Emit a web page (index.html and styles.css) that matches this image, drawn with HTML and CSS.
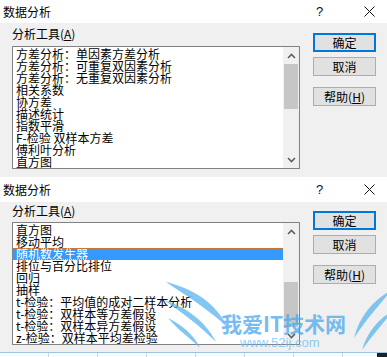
FILE: index.html
```html
<!DOCTYPE html>
<html lang="zh-CN">
<head>
  <meta charset="UTF-8">
  <title>数据分析</title>
  <link rel="stylesheet" href="styles.css">
</head>
<body>

  <div class="page">

    <!-- first dialog: list scrolled to top -->
    <div class="dialog dialog-top">
      <div class="titlebar">
        <span class="title">数据分析</span>
        <span class="tb-help">?</span>
        <span class="tb-close">
          <svg width="11" height="11" viewBox="0 0 11 11"><path d="M0.5 0.5 L10.5 10.5 M10.5 0.5 L0.5 10.5" stroke="#111" stroke-width="1"/></svg>
        </span>
      </div>
      <div class="body">
        <div class="main">
          <div class="label">分析工具(<u>A</u>)</div>
          <div class="listbox">
            <ul class="items">
              <li>方差分析：单因素方差分析</li>
              <li>方差分析：可重复双因素分析</li>
              <li>方差分析：无重复双因素分析</li>
              <li>相关系数</li>
              <li>协方差</li>
              <li>描述统计</li>
              <li>指数平滑</li>
              <li>F-检验 双样本方差</li>
              <li>傅利叶分析</li>
              <li>直方图</li>
            </ul>
            <div class="scrollbar">
              <div class="arrow">
                <svg width="9" height="6" viewBox="0 0 9 6"><path d="M1 5 L4.5 1.5 L8 5" fill="none" stroke="#606060" stroke-width="1.6"/></svg>
              </div>
              <div class="track">
                <div class="thumb"></div>
              </div>
              <div class="arrow">
                <svg width="9" height="6" viewBox="0 0 9 6"><path d="M1 1 L4.5 4.5 L8 1" fill="none" stroke="#606060" stroke-width="1.6"/></svg>
              </div>
            </div>
          </div>
        </div>
        <div class="buttons">
          <button class="btn btn-default">确定</button>
          <button class="btn">取消</button>
          <button class="btn btn-help">帮助(<u>H</u>)</button>
        </div>
      </div>
    </div>

    <!-- second dialog: list scrolled to bottom -->
    <div class="dialog dialog-bottom">
      <div class="titlebar">
        <span class="title">数据分析</span>
        <span class="tb-help">?</span>
        <span class="tb-close">
          <svg width="11" height="11" viewBox="0 0 11 11"><path d="M0.5 0.5 L10.5 10.5 M10.5 0.5 L0.5 10.5" stroke="#111" stroke-width="1"/></svg>
        </span>
      </div>
      <div class="body">
        <div class="main">
          <div class="label">分析工具(<u>A</u>)</div>
          <div class="listbox">
            <ul class="items">
              <li>直方图</li>
              <li>移动平均</li>
              <li class="selected">随机数发生器</li>
              <li>排位与百分比排位</li>
              <li>回归</li>
              <li>抽样</li>
              <li>t-检验：平均值的成对二样本分析</li>
              <li>t-检验：双样本等方差假设</li>
              <li>t-检验：双样本异方差假设</li>
              <li>z-检验：双样本平均差检验</li>
            </ul>
            <div class="scrollbar scrolled-end">
              <div class="arrow">
                <svg width="9" height="6" viewBox="0 0 9 6"><path d="M1 5 L4.5 1.5 L8 5" fill="none" stroke="#606060" stroke-width="1.6"/></svg>
              </div>
              <div class="track">
                <div class="thumb"></div>
              </div>
              <div class="arrow">
                <svg width="9" height="6" viewBox="0 0 9 6"><path d="M1 1 L4.5 4.5 L8 1" fill="none" stroke="#606060" stroke-width="1.6"/></svg>
              </div>
            </div>
          </div>
        </div>
        <div class="buttons">
          <button class="btn btn-default">确定</button>
          <button class="btn">取消</button>
          <button class="btn btn-help">帮助(<u>H</u>)</button>
        </div>
      </div>
    </div>

    <!-- strip of the sheet behind the dialog -->
    <div class="sheet-strip">
      <span></span><span></span><span></span><span></span><span></span><span></span><span></span><span class="dark"></span>
    </div>

    <!-- site watermark -->
    <div class="watermark">
      <svg class="wing wing-left" width="72" height="72" viewBox="0 0 72 72">
        <path d="M4 4 C22 8 52 20 66 50 C50 34 28 20 4 4 Z" fill="#5ab4ee"/>
        <path d="M2 22 C20 28 42 40 54 64 C38 48 22 36 2 22 Z" fill="#5ab4ee"/>
        <path d="M6 40 C18 46 32 56 38 70 C28 60 16 52 6 40 Z" fill="#5ab4ee"/>
      </svg>
      <svg class="wing wing-right" width="50" height="66" viewBox="0 0 50 66">
        <path d="M46 2 C30 10 14 26 8 50 C20 32 32 18 46 2 Z" fill="#5ab4ee"/>
        <path d="M48 22 C34 30 22 42 16 62 C26 48 36 36 48 22 Z" fill="#5ab4ee"/>
      </svg>
      <div class="wm-name">我爱IT技术网</div>
      <div class="wm-url">www.52ij.com</div>
    </div>

  </div>

</body>
</html>
```

FILE: styles.css
```css
body {
  margin: 0;
  font-family: "Noto Sans CJK SC", "Noto Sans", sans-serif;
  background-color: #f0f0f0;
  color: #000;
  overflow: hidden;
}

.page {
  position: relative;
  width: 387px;
  height: 357px;
  overflow: hidden;
}

/* Dialog */
.dialog {
  width: 387px;
  background-color: #f0f0f0;
}

.dialog-top {
  margin-top: -2px;
}

.titlebar {
  height: 25px;
  background-color: #fff;
  display: flex;
  align-items: center;
  font-size: 12px;
}

.dialog-top .titlebar {
  border-top: 1px solid #8fa8c4;
  height: 24px;
}

.title {
  padding-left: 3px;
  flex: 1;
  color: #000;
}

.tb-help {
  width: 12px;
  margin-right: 36px;
  font-family: "Liberation Sans", sans-serif;
  font-size: 13px;
  color: #111;
}

.tb-close {
  width: 11px;
  height: 11px;
  margin-right: 12px;
  display: flex;
}

.body {
  display: flex;
  height: 154px;
}

.dialog-bottom .body {
  height: 150px;
}

.main {
  padding-left: 12px;
  width: 288px;
}

.label {
  font-size: 12px;
  line-height: 12px;
  margin-top: 5px;
  margin-bottom: 6px;
}

.dialog-bottom .label {
  margin-top: 3px;
  margin-bottom: 5px;
}

.label u,
.btn u {
  text-decoration: underline;
  text-underline-offset: 1px;
}

/* Listbox */
.listbox {
  display: flex;
  width: 286px;
  height: 121px;
  border: 1px solid #828282;
  background-color: #fff;
}

.items {
  list-style: none;
  margin: 0;
  padding: 1px 0 0 0;
  flex: 1;
  font-size: 12px;
  line-height: 12px;
  overflow: hidden;
}

.items li {
  height: 12px;
  padding-left: 3px;
  white-space: nowrap;
}

.items li.selected {
  background-color: #3399ff;
  color: #fff;
  outline: 1px dotted #cc7a33;
  outline-offset: -1px;
}

.scrollbar {
  width: 16px;
  background-color: #f0f0f0;
  display: flex;
  flex-direction: column;
}

.arrow {
  height: 17px;
  display: flex;
  align-items: center;
  justify-content: center;
}

.track {
  flex: 1;
  display: flex;
  flex-direction: column;
  padding: 0 1px;
}

.scrolled-end .track {
  justify-content: flex-end;
}

.thumb {
  height: 45px;
  background-color: #c6c6c6;
}

/* Buttons */
.buttons {
  margin-left: 13px;
  display: flex;
  flex-direction: column;
  padding-top: 10px;
}

.dialog-bottom .buttons {
  padding-top: 9px;
}

.btn {
  width: 63px;
  height: 19px;
  margin: 0 0 5px 0;
  padding: 0;
  background-color: #e1e1e1;
  border: 1px solid #adadad;
  font-family: "Noto Sans CJK SC", "Noto Sans", sans-serif;
  font-size: 12px;
  line-height: 15px;
  color: #000;
}

.btn-default {
  border: 2px solid #0078d7;
}

.btn-help {
  margin-top: 6px;
}

/* Sheet behind the dialog */
.sheet-strip {
  height: 5px;
  border-top: 1px solid #9cc3e5;
  background-color: #fafafa;
  display: flex;
}

.sheet-strip span {
  width: 48px;
  border-right: 1px solid #d4d4d4;
}

.sheet-strip span.dark {
  width: 10px;
  margin-left: auto;
  background-color: #222;
  border: none;
}

/* Watermark */
.watermark {
  position: absolute;
  left: 160px;
  top: 276px;
  width: 227px;
  height: 81px;
  pointer-events: none;
  opacity: 0.75;
}

.wing {
  position: absolute;
}

.wing-left {
  left: 2px;
  top: 2px;
}

.wing-right {
  left: 186px;
  top: 12px;
}

.wm-name {
  position: absolute;
  left: 61px;
  top: 36px;
  font-size: 21px;
  line-height: 22px;
  font-weight: bold;
  color: #4aa8ec;
}

.wm-url {
  position: absolute;
  left: 80px;
  top: 60px;
  font-family: "Liberation Sans", sans-serif;
  font-size: 13px;
  line-height: 13px;
  color: #6cc0f5;
}
```
